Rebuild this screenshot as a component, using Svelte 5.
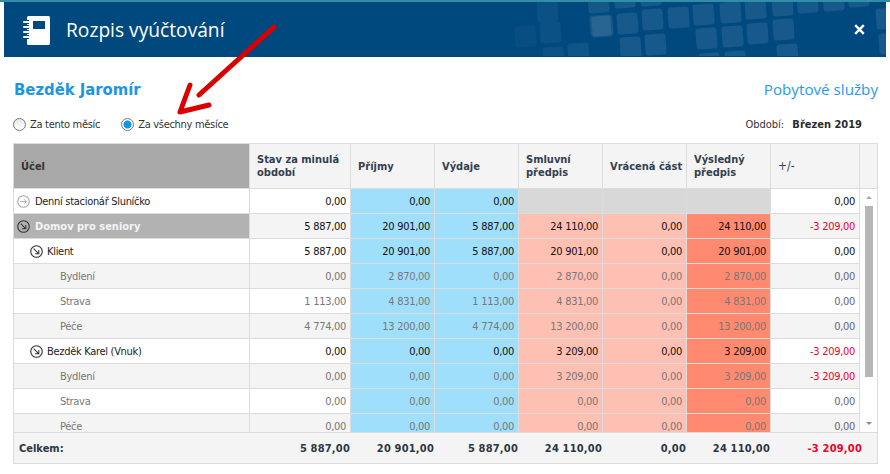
<script>
  const columns = [
    { label: ['Stav za minulá', 'období'] },
    { label: ['Příjmy'] },
    { label: ['Výdaje'] },
    { label: ['Smluvní', 'předpis'] },
    { label: ['Vrácená část'] },
    { label: ['Výsledný', 'předpis'] },
    { label: ['+/-'], plain: true }
  ];
  const rows = [
    { name: 'Denní stacionář Sluníčko', level: 0, icon: 'go', cells: ['0,00', '0,00', '0,00', '', '', '', '0,00'], kind: 'first' },
    { name: 'Domov pro seniory', level: 0, icon: 'open', cells: ['5 887,00', '20 901,00', '5 887,00', '24 110,00', '0,00', '24 110,00', '-3 209,00'], kind: 'group' },
    { name: 'Klient', level: 1, icon: 'open', cells: ['5 887,00', '20 901,00', '5 887,00', '20 901,00', '0,00', '20 901,00', '0,00'], kind: 'person' },
    { name: 'Bydlení', level: 2, cells: ['0,00', '2 870,00', '0,00', '2 870,00', '0,00', '2 870,00', '0,00'], kind: 'item alt' },
    { name: 'Strava', level: 2, cells: ['1 113,00', '4 831,00', '1 113,00', '4 831,00', '0,00', '4 831,00', '0,00'], kind: 'item' },
    { name: 'Péče', level: 2, cells: ['4 774,00', '13 200,00', '4 774,00', '13 200,00', '0,00', '13 200,00', '0,00'], kind: 'item alt' },
    { name: 'Bezděk Karel (Vnuk)', level: 1, icon: 'open', cells: ['0,00', '0,00', '0,00', '3 209,00', '0,00', '3 209,00', '-3 209,00'], kind: 'person' },
    { name: 'Bydlení', level: 2, cells: ['0,00', '0,00', '0,00', '3 209,00', '0,00', '3 209,00', '-3 209,00'], kind: 'item alt' },
    { name: 'Strava', level: 2, cells: ['0,00', '0,00', '0,00', '0,00', '0,00', '0,00', '0,00'], kind: 'item' },
    { name: 'Péče', level: 2, cells: ['0,00', '0,00', '0,00', '0,00', '0,00', '0,00', '0,00'], kind: 'item alt' }
  ];
  const totals = ['5 887,00', '20 901,00', '5 887,00', '24 110,00', '0,00', '24 110,00', '-3 209,00'];
  const tints = ['', 'blue', 'blue', 'pink', 'pink', 'salmon', ''];
  const squares = [
    [515,26],[537,1],[540,22],[543,47],[568,43],[588,-8],[592,16],
    [590,15],[617,13],[642,9],[668,7],[693,4],[720,2],[745,-2],[772,-5],[797,-8],[823,-10],[848,-14],[876,8],
    [620,37],[645,34],[696,28],[722,26],[747,23],[773,19],[879,33],
    [777,44],[725,51],[699,53],[614,-13],[640,-15]
  ];
  const tileOpacity = (x) => Math.min(0.09, Math.max(0.03, 0.03 + (x - 515) * 0.0007));
</script>

<div class="page">
  <div class="topline"></div>
  <header class="bar">
    <svg class="book" viewBox="0 0 28 30" width="28" height="30" aria-hidden="true">
      <path d="M4 2.5a1.5 1.5 0 0 1 1.5-1.5h20a1.5 1.5 0 0 1 1.5 1.5v26a1.5 1.5 0 0 1-1.5 1.5h-20a1.500 1.500 0 0 1-1.500-1.500z" fill="#fff"/>
      <rect x="10" y="6" width="12" height="8" fill="#00497f"/>
      <path d="M1 7h5M1 12h5M1 17h5M1 22h5" stroke="#00497f" stroke-width="4.2"/>
      <path d="M1 7h5M1 12h5M1 17h5M1 22h5" stroke="#fff" stroke-width="2" stroke-linecap="round"/>
    </svg>
    <h1>Rozpis vyúčtování</h1>
    <svg class="pattern" viewBox="4 2 882 54" width="882" height="54" aria-hidden="true">
      {#each squares as s}
        <rect x={s[0]} y={s[1]} width="21" height="21" rx="3" fill="#fff" fill-opacity={tileOpacity(s[0])} transform="rotate(-4 {s[0] + 10} {s[1] + 10})"/>
      {/each}
    </svg>
    <svg class="close" viewBox="0 0 11 11" width="11" height="11" aria-label="Zavřít">
      <path d="M1.2 1.2l8.6 8.6M9.8 1.2l-8.6 8.6" stroke="#fff" stroke-width="2.4"/>
    </svg>
  </header>

  <div class="titles">
    <h2>Bezděk Jaromír</h2>
    <span class="service">Pobytové služby</span>
  </div>

  <div class="filters">
    <label class="radio"><span class="dot"></span>Za tento měsíc</label>
    <label class="radio on"><span class="dot"></span>Za všechny měsíce</label>
    <span class="period">Období: <b>Březen 2019</b></span>
  </div>

  <div class="table">
    <div class="line head">
      <div class="cell purpose">Účel</div>
      {#each columns as c}
        <div class="cell th" class:plain={c.plain}>{#each c.label as l}<span>{l}</span>{/each}</div>
      {/each}
      <div class="cell end"></div>
    </div>

    <div class="body">
      <div class="rows">
        {#each rows as r}
          <div class="line row {r.kind}">
            <div class="cell name lvl{r.level}">
              {#if r.icon}
                <svg class="ico {r.icon}" viewBox="0 0 14 14" width="13" height="13" aria-hidden="true">
                  <circle cx="7" cy="7" r="6.2" fill="none" stroke="currentColor" stroke-width="1.2"/>
                  {#if r.icon === 'go'}
                    <path d="M3.5 7h6.5M7.5 4.5L10 7l-2.500 2.500" fill="none" stroke="currentColor"/>
                  {:else}
                    <path d="M4 4l5.500 5.500M9.500 5.500v4h-4" fill="none" stroke="currentColor" stroke-width="1.1"/>
                  {/if}
                </svg>
              {/if}
              <span class="label">{r.name}</span>
            </div>
            {#each r.cells as v, i}
              <div class="cell num {tints[i]}" class:empty={v === ''} class:neg={v.startsWith('-')} class:diff={i === 6}>{v}</div>
            {/each}
          </div>
        {/each}
      </div>
      <div class="scroll">
        <span class="arrow-up"></span>
        <span class="thumb"></span>
        <span class="arrow-down"></span>
      </div>
    </div>

    <div class="line foot">
      <div class="cell total">Celkem:</div>
      {#each totals as v}
        <div class="cell tnum" class:neg={v.startsWith('-')}>{v}</div>
      {/each}
    </div>
  </div>

  <svg class="arrow" viewBox="0 0 890 474" width="890" height="474" aria-hidden="true">
    <path d="M274 27L199 95" stroke="#d80000" stroke-width="5" stroke-linecap="round" fill="none"/>
    <path d="M190 85L180 112L209 105" stroke="#d80000" stroke-width="5" stroke-linecap="round" stroke-linejoin="round" fill="none"/>
  </svg>
</div>

<style>
  :global(body) { margin: 0; background: #fff; }
  .page {
    position: relative;
    width: 890px;
    height: 474px;
    overflow: hidden;
    font-family: "DejaVu Sans Condensed", "DejaVu Sans", sans-serif;
    font-size: 11px;
    color: #222;
  }
  .topline { height: 2px; background: #2e8fa6; }
  .bar {
    position: relative;
    display: flex;
    align-items: center;
    margin: 0 4px;
    height: 55px;
    padding: 0 19px;
    background: #00497f;
    overflow: hidden;
  }
  .book { flex: none; margin-right: 15px; }
  h1 {
    margin: 0;
    font: 400 19.200px "Open Sans", sans-serif;
    color: #fff;
  }
  .pattern { position: absolute; left: 0; top: 0; }
  .close { position: absolute; right: 21px; top: 22px; }
  .titles {
    display: flex;
    justify-content: space-between;
    align-items: center;
    padding: 0 12px 0 14px;
    margin-top: 21px;
    height: 22px;
  }
  h2 {
    margin: 0;
    font: 700 16.500px "DejaVu Sans Condensed", "DejaVu Sans", sans-serif;
    color: #1c96e4;
  }
  .service { font: 400 15.200px "Open Sans", sans-serif; color: #2a9be6; }
  .filters {
    display: flex;
    align-items: center;
    gap: 21px;
    margin-top: 14px;
    padding: 0 28px 0 13px;
    height: 20px;
  }
  .radio { display: flex; align-items: center; gap: 4px; color: #333; letter-spacing: -0.3px; }
  .dot {
    box-sizing: border-box;
    width: 13px;
    height: 13px;
    border: 1px solid #777;
    border-radius: 50%;
    background: linear-gradient(#e6e6e6, #fff);
  }
  .on .dot {
    background: radial-gradient(circle, #1597e8 0 3.800px, #fff 4.300px);
  }
  .period { margin-left: auto; color: #333; }
  .period b { margin-left: 5px; font-weight: 700; color: #2c2c2c; }
  .table {
    box-sizing: border-box;
    width: 865px;
    margin: 9px 0 0 13px;
    border: 1px solid #dcdcdc;
  }
  .line {
    display: grid;
    grid-template-columns: 236px 101px 84px 84px 84px 84px 84px 89px;
  }
  .head {
    grid-template-columns: 236px 101px 84px 84px 84px 84px 84px 89px 17px;
    height: 45px;
    border-bottom: 1px solid #dcdcdc;
    box-sizing: border-box;
  }
  .cell { box-sizing: border-box; border-right: 1px solid #dcdcdc; }
  .purpose {
    display: flex;
    align-items: center;
    padding-left: 7px;
    background: #a8a8a8;
    font-weight: 700;
    color: #333;
  }
  .th {
    display: flex;
    flex-direction: column;
    justify-content: center;
    padding-left: 7px;
    background: #f4f4f4;
    font-weight: 700;
    line-height: 13px;
    color: #33404f;
    white-space: nowrap;
  }
  .plain { font-weight: 400; font-size: 12px; }
  .end { background: #f4f4f4; border-right: 0; }
  .body { position: relative; height: 243px; overflow: hidden; }
  .rows { width: 846px; }
  .row { height: 25px; border-bottom: 1px solid #dcdcdc; box-sizing: border-box; grid-template-rows: 24px; }
  .row .cell { display: flex; align-items: center; line-height: 22px; }
  .label, .num { letter-spacing: -0.3px; }
  .label { position: relative; top: 1px; }
  .row .num { padding-top: 2px; }
  .name { gap: 5px; padding-left: 3px; color: #222; background: #fff; }
  .lvl1 { padding-left: 16px; gap: 4px; }
  .lvl2 { padding-left: 46px; }
  .ico { flex: none; color: #333; }
  .ico.go { color: #aaa; }
  .num { justify-content: flex-end; padding-right: 4px; background: #fff; color: #111; }
  .alt .name, .alt .num { background: #f4f4f4; }
  .item .name { color: #777; }
  .item .num { color: #777; }
  .item .diff { color: #667; }
  .row .blue, .alt .blue { background: #a0dffb; }
  .row .pink, .alt .pink { background: #ffc0b4; }
  .row .salmon, .alt .salmon { background: #ff8a70; }
  .row .empty, .alt .empty { background: #d8d8d8; }
  .group .name { background: #b2b2b2; color: #f4f4f4; font-weight: 700; }
  .group .label { letter-spacing: 0; }
  .group .diff { background: #f4f4f4; }
  .group .cell:nth-child(2) { background: #f4f4f4; }
  .first .cell:nth-child(2), .first .diff { background: #fff; }
  .num.neg, .item .num.neg { color: #f0002a; }
  .scroll {
    position: absolute;
    top: 0;
    right: 0;
    bottom: 0;
    width: 17px;
    background: #fff;
  }
  .arrow-up, .arrow-down {
    position: absolute;
    left: 6px;
    width: 0;
    height: 0;
    border-left: 3px solid transparent;
    border-right: 3px solid transparent;
  }
  .arrow-up { top: 7px; border-bottom: 3px solid #aaa; }
  .arrow-down { bottom: 7px; border-top: 3px solid #888; }
  .thumb {
    position: absolute;
    left: 5px;
    top: 17px;
    width: 8px;
    height: 171px;
    background: #b6b6b6;
  }
  .foot {
    box-sizing: border-box;
    height: 31px;
    align-items: center;
    background: #f4f4f4;
    border-top: 1px solid #dcdcdc;
  }
  .foot .cell { border: 0; font-weight: 700; color: #2c3744; }
  .total { padding-left: 5px; color: #222; }
  .tnum { text-align: right; padding-right: 1px; letter-spacing: 0.2px; }
  .foot .tnum.neg { color: #f0002a; padding-right: 0; position: relative; left: 2px; }
  .arrow { position: absolute; left: 0; top: 0; pointer-events: none; }
</style>
